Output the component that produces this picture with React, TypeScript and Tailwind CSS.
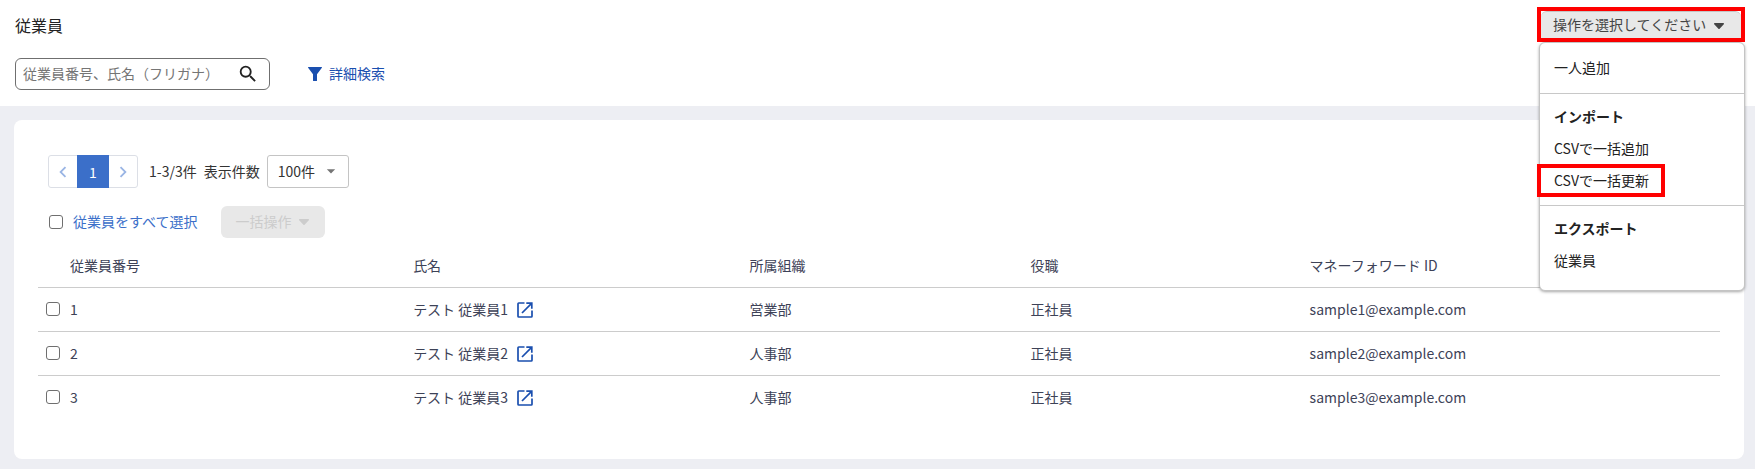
import { MdArrowDropDown, MdChevronLeft, MdChevronRight, MdSearch } from 'react-icons/md';

interface Employee {
  id: number;
  name: string;
  department: string;
  position: string;
  email: string;
}

const employees: Employee[] = [
  { id: 1, name: 'テスト 従業員1', department: '営業部', position: '正社員', email: 'sample1@example.com' },
  { id: 2, name: 'テスト 従業員2', department: '人事部', position: '正社員', email: 'sample2@example.com' },
  { id: 3, name: 'テスト 従業員3', department: '人事部', position: '正社員', email: 'sample3@example.com' },
];

const checkboxClass =
  'block size-[14px] appearance-none rounded-[3px] border border-[#6f6f6f] bg-white checked:bg-[#3b6fc9]';

function Caret() {
  return (
    <svg viewBox="0 0 10 6" className="mt-[3px] h-[6px] w-[10px]" fill="currentColor" aria-hidden="true">
      <path d="M.8 0h8.4c.7 0 1.1.8.6 1.3L5.6 5.7a.8.8 0 0 1-1.2 0L.2 1.3C-.3.8.1 0 .8 0z" />
    </svg>
  );
}

function FilterIcon() {
  return (
    <svg viewBox="0 0 14 14" className="size-[14px]" fill="currentColor" aria-hidden="true">
      <path d="M.4 0h13.2c.4 0 .5.5.3.8L9 7.2v6.2c0 .3-.2.6-.6.6H5.7c-.4 0-.7-.3-.7-.6V7.2L.1.8C-.1.5 0 0 .4 0z" />
    </svg>
  );
}

function OpenIcon() {
  return (
    <svg
      viewBox="0 0 16 16"
      className="size-4"
      fill="none"
      stroke="currentColor"
      strokeWidth="1.7"
      aria-hidden="true"
    >
      <path d="M7.5 1H1.8a.8.8 0 0 0-.8.8v12.4c0 .4.4.8.8.8h12.4c.4 0 .8-.4.8-.8V8.5" />
      <path d="M9.3 1.2h5.5v5.5M14.6 1.4L5 11" />
    </svg>
  );
}

function ActionMenu() {
  return (
    <div className="relative z-10 w-[208px]">
      <div className="border-4 border-[#ff0000] bg-white">
        <button
          type="button"
          className="flex h-[27px] w-full items-center gap-2 rounded-t-md border-t border-[#c4c4c4] bg-[#e8e8e8] pb-[2px] pl-3 text-sm text-[#444]"
        >
          操作を選択してください
          <Caret />
        </button>
      </div>

      <div className="absolute left-[2px] right-0 top-full rounded-md border border-[#c4c4c4] bg-white pb-[14px] text-sm leading-8 text-[#222] shadow-[0_1px_3px_rgba(0,0,0,0.35)]">
        <div className="border-b border-[#c8c8c8] px-[14px] pb-[10px] pt-2">
          <a href="#add" className="block">一人追加</a>
        </div>
        <div className="border-b border-[#c8c8c8] px-[14px] pb-[9px] pt-[6px]">
          <p className="font-bold">インポート</p>
          <a href="#csv-add" className="block">CSVで一括追加</a>
          <a href="#csv-update" className="relative block">
            CSVで一括更新
            <span className="absolute -left-[17px] top-0 h-[33px] w-[128px] border-4 border-[#ff0000]" />
          </a>
        </div>
        <div className="px-[14px] pt-[6px]">
          <p className="font-bold">エクスポート</p>
          <a href="#export" className="block">従業員</a>
        </div>
      </div>
    </div>
  );
}

function Pagination() {
  return (
    <div className="flex items-center pl-[10px] text-sm text-[#333]">
      <nav className="flex h-[33px] rounded-[3px] border border-[#dcdfe6]">
        <button type="button" aria-label="前へ" className="flex w-7 items-center justify-center text-[#9ab5e4]">
          <MdChevronLeft className="size-[22px]" />
        </button>
        <button type="button" className="-my-px w-8 bg-[#3b6fc9] text-white">1</button>
        <button type="button" aria-label="次へ" className="flex w-7 items-center justify-center text-[#9ab5e4]">
          <MdChevronRight className="size-[22px]" />
        </button>
      </nav>
      <span className="ml-[11px] pb-[2px]">1-3/3件</span>
      <label htmlFor="per-page" className="ml-[7px] pb-[2px]">表示件数</label>
      <div className="relative ml-[7px]">
        <select
          id="per-page"
          className="block h-[33px] w-[82px] appearance-none rounded-[3px] border border-[#c4c4c4] bg-white pb-[2px] pl-[10px]"
        >
          <option>100件</option>
        </select>
        <MdArrowDropDown className="pointer-events-none absolute right-2 top-[6px] size-5 text-[#757575]" />
      </div>
    </div>
  );
}

function EmployeeTable() {
  return (
    <table className="mt-3 w-full table-fixed text-left text-sm text-[#3d4257]">
      <colgroup>
        <col className="w-8" />
        <col className="w-[20.4%]" />
        <col className="w-[20%]" />
        <col className="w-[16.7%]" />
        <col className="w-[16.6%]" />
        <col />
      </colgroup>
      <thead>
        <tr className="h-[37px] border-b border-[#ccc]">
          <td />
          <th className="pb-[6px] pt-0 font-normal">従業員番号</th>
          <th className="pb-[6px] pt-0 font-normal">氏名</th>
          <th className="pb-[6px] pt-0 font-normal">所属組織</th>
          <th className="pb-[6px] pt-0 font-normal">役職</th>
          <th className="pb-[6px] pt-0 font-normal">マネーフォワード ID</th>
        </tr>
      </thead>
      <tbody>
        {employees.map((employee) => (
          <tr key={employee.id} className="h-11 border-b border-[#ccc] last:border-b-0">
            <td className="pb-px pl-2">
              <input type="checkbox" aria-label={employee.name} className={checkboxClass} />
            </td>
            <td className="pb-px">{employee.id}</td>
            <td className="pb-px">
              <span className="flex items-center gap-[9px]">
                {employee.name}
                <a href={`#employee-${employee.id}`} aria-label={employee.name} className="pt-[3px] text-[#1a4faf]">
                  <OpenIcon />
                </a>
              </span>
            </td>
            <td className="pb-px">{employee.department}</td>
            <td className="pb-px">{employee.position}</td>
            <td className="pb-px">{employee.email}</td>
          </tr>
        ))}
      </tbody>
    </table>
  );
}

export default function App() {
  return (
    <div className="min-h-screen bg-[#edeef3] font-['Noto_Sans_CJK_JP',sans-serif]">
      <header className="flex h-[106px] items-start justify-between bg-white pl-[15px] pr-[10px] pt-[7px]">
        <div>
          <h1 className="pt-[6px] text-base leading-6 text-[#222]">従業員</h1>
          <div className="mt-[21px] flex items-center">
            <div className="flex h-8 w-[255px] items-center rounded-md border border-[#6f6f6f] pl-[7px] pr-[10px]">
              <input
                type="text"
                aria-label="従業員番号、氏名（フリガナ）"
                placeholder="従業員番号、氏名（フリガナ）"
                className="min-w-0 flex-1 pb-[3px] text-sm outline-none placeholder:text-[#757575]"
              />
              <MdSearch className="size-[22px] text-[#222]" />
            </div>
            <a href="#search" className="ml-[38px] flex items-center gap-[7px] text-sm text-[#1a4faf]">
              <FilterIcon />
              <span className="pb-[3px]">詳細検索</span>
            </a>
          </div>
        </div>
        <ActionMenu />
      </header>

      <main className="pb-[10px] pl-[14px] pr-[11px] pt-[14px]">
        <section className="rounded-lg bg-white px-6 pb-10 pt-[35px]">
          <Pagination />
          <div className="mt-[18px] flex items-center pl-[11px] text-sm">
            <label className="flex items-center gap-[10px] text-[#3b6fc9]">
              <input type="checkbox" className={checkboxClass} />
              <span className="pb-[2px]">従業員をすべて選択</span>
            </label>
            <button
              type="button"
              disabled
              className="ml-6 flex h-8 w-[104px] items-center gap-2 rounded-md bg-[#e8e8e8] pb-[3px] pl-[14px] text-[#ccc]"
            >
              一括操作
              <Caret />
            </button>
          </div>
          <EmployeeTable />
        </section>
      </main>
    </div>
  );
}
